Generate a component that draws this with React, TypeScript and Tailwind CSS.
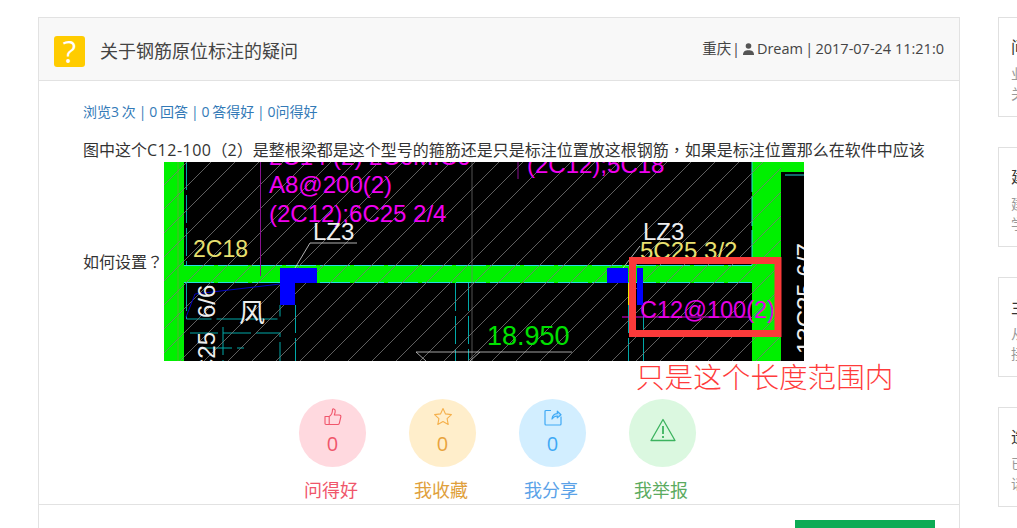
const FONT = "font-['Open_Sans','Noto_Sans_CJK_SC',sans-serif]";
const TC = "font-['Noto_Sans_CJK_TC',sans-serif]";

function ThumbIcon() {
  return (
    <svg width="18" height="18" viewBox="0 0 18 18" fill="none" stroke="#f0566b" strokeWidth="1.1" strokeLinejoin="round">
      <path d="M1 8.500h4.200v8H2a1 1 0 0 1-1-1z" />
      <path d="M5.200 8.500c2-1 3.200-3 3.300-6.700 0-1.300 2.600-1.300 2.700 1 .1 1.700-.4 3-.9 4.200h5c1.300 0 1.800 1 1.500 2l-1.500 6.300c-.2.700-.7 1.200-1.500 1.200H5.200" />
    </svg>
  );
}
function StarIcon() {
  return (
    <svg width="20" height="20" viewBox="0 0 20 20" fill="none" stroke="#f5b04c" strokeWidth="1.1" strokeLinejoin="round">
      <path d="M10 1.500l2.500 5.400 5.900.7-4.300 4 1.100 5.900-5.200-2.900-5.200 2.900 1.100-5.900-4.300-4 5.900-.7z" />
    </svg>
  );
}
function ShareIcon() {
  return (
    <svg width="18" height="17" viewBox="0 0 18 17" fill="none" stroke="#3fa9f5" strokeWidth="1.200" strokeLinejoin="round">
      <path d="M7 1.500H2a1 1 0 0 0-1 1v12.500a1 1 0 0 0 1 1h14a1 1 0 0 0 1-1V7.500" />
      <path d="M8 10c.3-3.500 2.300-5.300 5.300-5.500V2.200L17 5.700l-3.700 3.200V7C11.300 7 9.500 8 8 10z" fill="#3fa9f5" fillOpacity=".25" />
    </svg>
  );
}
function AlertIcon() {
  return (
    <svg width="26" height="24" viewBox="0 0 26 24" fill="none" stroke="#3cb35f" strokeWidth="1.300" strokeLinejoin="round">
      <path d="M13 1.500L25 22.500H1z" />
      <path d="M13 8v8M13 18v2" strokeWidth="1.800" />
    </svg>
  );
}
function UserIcon() {
  return (
    <svg width="11" height="12" viewBox="0 0 11 12" fill="#555" className="inline-block">
      <circle cx="5.500" cy="3" r="2.800" />
      <path d="M0 12c0-3.500 2-4.800 5.500-4.800S11 8.500 11 12z" />
    </svg>
  );
}

function Drawing() {
  const hatch: number[] = [];
  for (let i = -200; i < 620; i += 24) hatch.push(i);
  return (
    <svg width="640" height="199" viewBox="0 0 640 199" className="block shrink-0" style={{ fontFamily: "Liberation Sans, sans-serif" }}>
      <rect width="640" height="199" fill="#000" />
      <rect x="0" y="0" width="20" height="199" fill="#00f000" />
      <rect x="20" y="103" width="568" height="18" fill="#00f000" />
      <rect x="588" y="0" width="29" height="199" fill="#00f000" />
      <path d="M20 103.500H588M20 120.500H588M588 0V103" stroke="#22e0e0" strokeWidth="1" strokeDasharray="30 4" fill="none" />
      <path d="M22.500 0V103M22.500 121V157H116V143M26 171H116V199M59 165V199M40 186H80M131.500 143V199M291.500 121V199M304.500 121V199M464.500 143V199M479.500 143V199" stroke="#00a8a8" strokeWidth="1" strokeDasharray="28 5" fill="none" />
      <g stroke="#777" strokeWidth=".8">
        {hatch.map((x) => (
          <line key={x} x1={x} y1={199} x2={x + 199} y2={0} />
        ))}
      </g>
      <rect x="617" y="10" width="23" height="189" fill="#000" />
      <rect x="617" y="0" width="23" height="10" fill="#00f000" />
      <path d="M621 13H640" stroke="#22d3d3" strokeWidth="1" />
      <path d="M14 0V199" stroke="#7a9a40" strokeWidth=".7" />
      <path d="M308 0V199" stroke="#777" strokeWidth=".7" />
      <path d="M96.500 0V114" stroke="#8a1090" strokeWidth="1" />
      <path d="M354 0V17" stroke="#8a1090" strokeWidth="1" />
      <path d="M252 190H408M252 190L262 199M316 190L306 199" stroke="#ccc" strokeWidth=".8" fill="none" />
      <rect x="116" y="106" width="37" height="15" fill="#0000ff" />
      <rect x="116" y="106" width="15" height="37" fill="#0000ff" />
      <rect x="443" y="106" width="21" height="15" fill="#0000ff" />
      <path d="M464.500 121V143" stroke="#e8e800" strokeWidth="1" />
      <path d="M116 122L31 132L22 155" stroke="#0000c0" strokeWidth="1" fill="none" />
      <path d="M146 81L131 106M146 81H193" stroke="#ddd" strokeWidth=".8" fill="none" />
      <path d="M459 106L476 84" stroke="#ddd" strokeWidth=".8" fill="none" />
      <text x="105" y="31" fill="#f000f0" fontSize="24">A8@200(2)</text>
      <text x="105" y="60" fill="#f000f0" fontSize="24">(2C12);6C25 2/4</text>
      <text x="105" y="3" fill="#f000f0" fontSize="24">2C14 (2) 2C6M.C6</text>
      <text x="363" y="11" fill="#f000f0" fontSize="24">(2C12);5C18</text>
      <text x="29" y="95" fill="#e8e070" fontSize="23">2C18</text>
      <text x="149" y="78" fill="#eee" fontSize="24">LZ3</text>
      <text x="479" y="78" fill="#eee" fontSize="24">LZ3</text>
      <text x="476" y="97" fill="#e8e070" fontSize="24">5C25 3/2</text>
      <text x="75" y="160" fill="#eee" fontSize="26" style={{ fontFamily: "Noto Sans CJK SC, sans-serif" }}>风</text>
      <text x="51" y="156" fill="#eee" fontSize="24" transform="rotate(-90 51 156)">6/6</text>
      <text x="51" y="214" fill="#eee" fontSize="24" transform="rotate(-90 51 214)">C25</text>
      <text x="323" y="183" fill="#00e000" fontSize="27">18.950</text>
      <text x="476" y="156" fill="#e600e6" fontSize="23.500">C12@100(2)</text>
      <path d="M458 155H587" stroke="#e600e6" strokeWidth="1" />
      <text x="650" y="192" fill="#eee" fontSize="24" transform="rotate(-90 650 192)">13C25 6/7</text>
      <rect x="468.500" y="98.500" width="145.500" height="73" fill="none" stroke="#fb3a3a" strokeWidth="7" />
      <rect x="473" y="106" width="6" height="37" fill="#0000ff" />
    </svg>
  );
}

function Action({ circle, text, num, icon, label }: { circle: string; text: string; num?: string; icon: React.ReactNode; label: string }) {
  return (
    <div className="flex w-[67px] flex-col items-center">
      <div className={`flex h-[68px] w-[67px] flex-col items-center rounded-full ${num ? "pt-[5px]" : "justify-center"} ${circle}`}>
        <div className={`flex items-center justify-center ${num ? "h-[26px]" : "mt-[-6px]"}`}>{icon}</div>
        {num ? <div className={`text-[20px] leading-[28px] ${num}`}>0</div> : null}
      </div>
      <div className={`mt-[10px] whitespace-nowrap pr-[3px] text-[18px] leading-[26px] ${text}`}>{label}</div>
    </div>
  );
}

function SideCard({ a, b, c }: { a: string; b: string; c: string }) {
  return (
    <div className="h-[100px] w-[60px] border border-[#e0e0e0] pl-[12px] pt-[17px]">
      <div className="whitespace-nowrap text-[16px] leading-[24px] text-[#333]">{a}</div>
      <div className="mt-[5px] whitespace-nowrap text-[14px] leading-[20px] text-[#999]">{b}</div>
      <div className="whitespace-nowrap text-[14px] leading-[20px] text-[#999]">{c}</div>
    </div>
  );
}

export default function App() {
  return (
    <div className={`flex h-[528px] w-[1017px] items-start overflow-hidden bg-white pl-[38px] pt-[17px] ${FONT}`}>
      <main className="h-[540px] w-[922px] shrink-0 border border-[#e2e2e2]">
        <header className="flex h-[63px] items-center justify-between border-b border-[#e2e2e2] bg-[#f8f8f8] pl-[15px] pr-[15px]">
          <div className="flex items-center pt-[4px]">
            <div className="flex h-[31px] w-[31px] items-center justify-center rounded-[3px] bg-[#ffcc00] text-[31px] font-normal leading-none text-white">?</div>
            <h1 className="ml-[15px] text-[18px] font-normal text-[#444]">关于钢筋原位标注的疑问</h1>
          </div>
          <div className="flex items-center text-[14.500px] text-[#444]">
            <span className="mr-[3px] [word-spacing:-3px]">重庆 |</span>
            <UserIcon />
            <span className="ml-[3px] whitespace-pre [word-spacing:-1.500px]">Dream | </span>
            <span>2017-07-24 11:21:0</span>
          </div>
        </header>
        <section className="pl-[44px] pt-[21px]">
          <div className="text-[14px] leading-[20px] text-[#337ab7] [word-spacing:-0.8px]">浏览3 次 | 0 回答 | 0 答得好 | 0问得好</div>
          <p className="mt-[15px] whitespace-nowrap text-[16px] leading-[24px] text-[#333]">
            图中这个<span className="tracking-[0.5px]">C12-100</span><span className={TC}>（</span>2<span className={TC}>）</span>是整根梁都是这个型号的箍筋还是只是标注位置放这根钢筋<span className={TC}>，</span>如果是标注位置那么在软件中应该
          </p>
          <div className="flex items-center">
            <span className="w-[81px] shrink-0 whitespace-nowrap text-[16px] text-[#333]">如何设置<span className={TC}>？</span></span>
            <Drawing />
          </div>
          <div className="ml-[553px] h-[38px] whitespace-nowrap text-[28.600px] font-light leading-[32px] text-[#ff3b3b]">只是这个长度范围内</div>
          <div className="ml-[216px] flex gap-[43px]">
            <Action circle="bg-[#ffd9df]" num="text-[#f0566b]" text="text-[#f0566b]" icon={<ThumbIcon />} label="问得好" />
            <Action circle="bg-[#ffeecb]" num="text-[#e8a33d]" text="text-[#e0a03c]" icon={<StarIcon />} label="我收藏" />
            <Action circle="bg-[#d2eeff]" num="text-[#3fa9f5]" text="text-[#5aa2e8]" icon={<ShareIcon />} label="我分享" />
            <Action circle="bg-[#dbf8e0]" text="text-[#5bab5f]" icon={<AlertIcon />} label="我举报" />
          </div>
        </section>
        <div className="mt-px flex justify-end border-t border-[#e2e2e2] pr-[24px] pt-[15px]">
          <div className="h-[30px] w-[140px] bg-[#0cab55]" />
        </div>
      </main>
      <aside className="ml-[38px] flex shrink-0 flex-col gap-[30px]">
        <SideCard a="问题" b="业内" c="关注" />
        <SideCard a="建筑" b="建筑" c="学习" />
        <SideCard a="主题" b="从业" c="接受" />
        <SideCard a="造价" b="已有" c="话题" />
      </aside>
    </div>
  );
}
